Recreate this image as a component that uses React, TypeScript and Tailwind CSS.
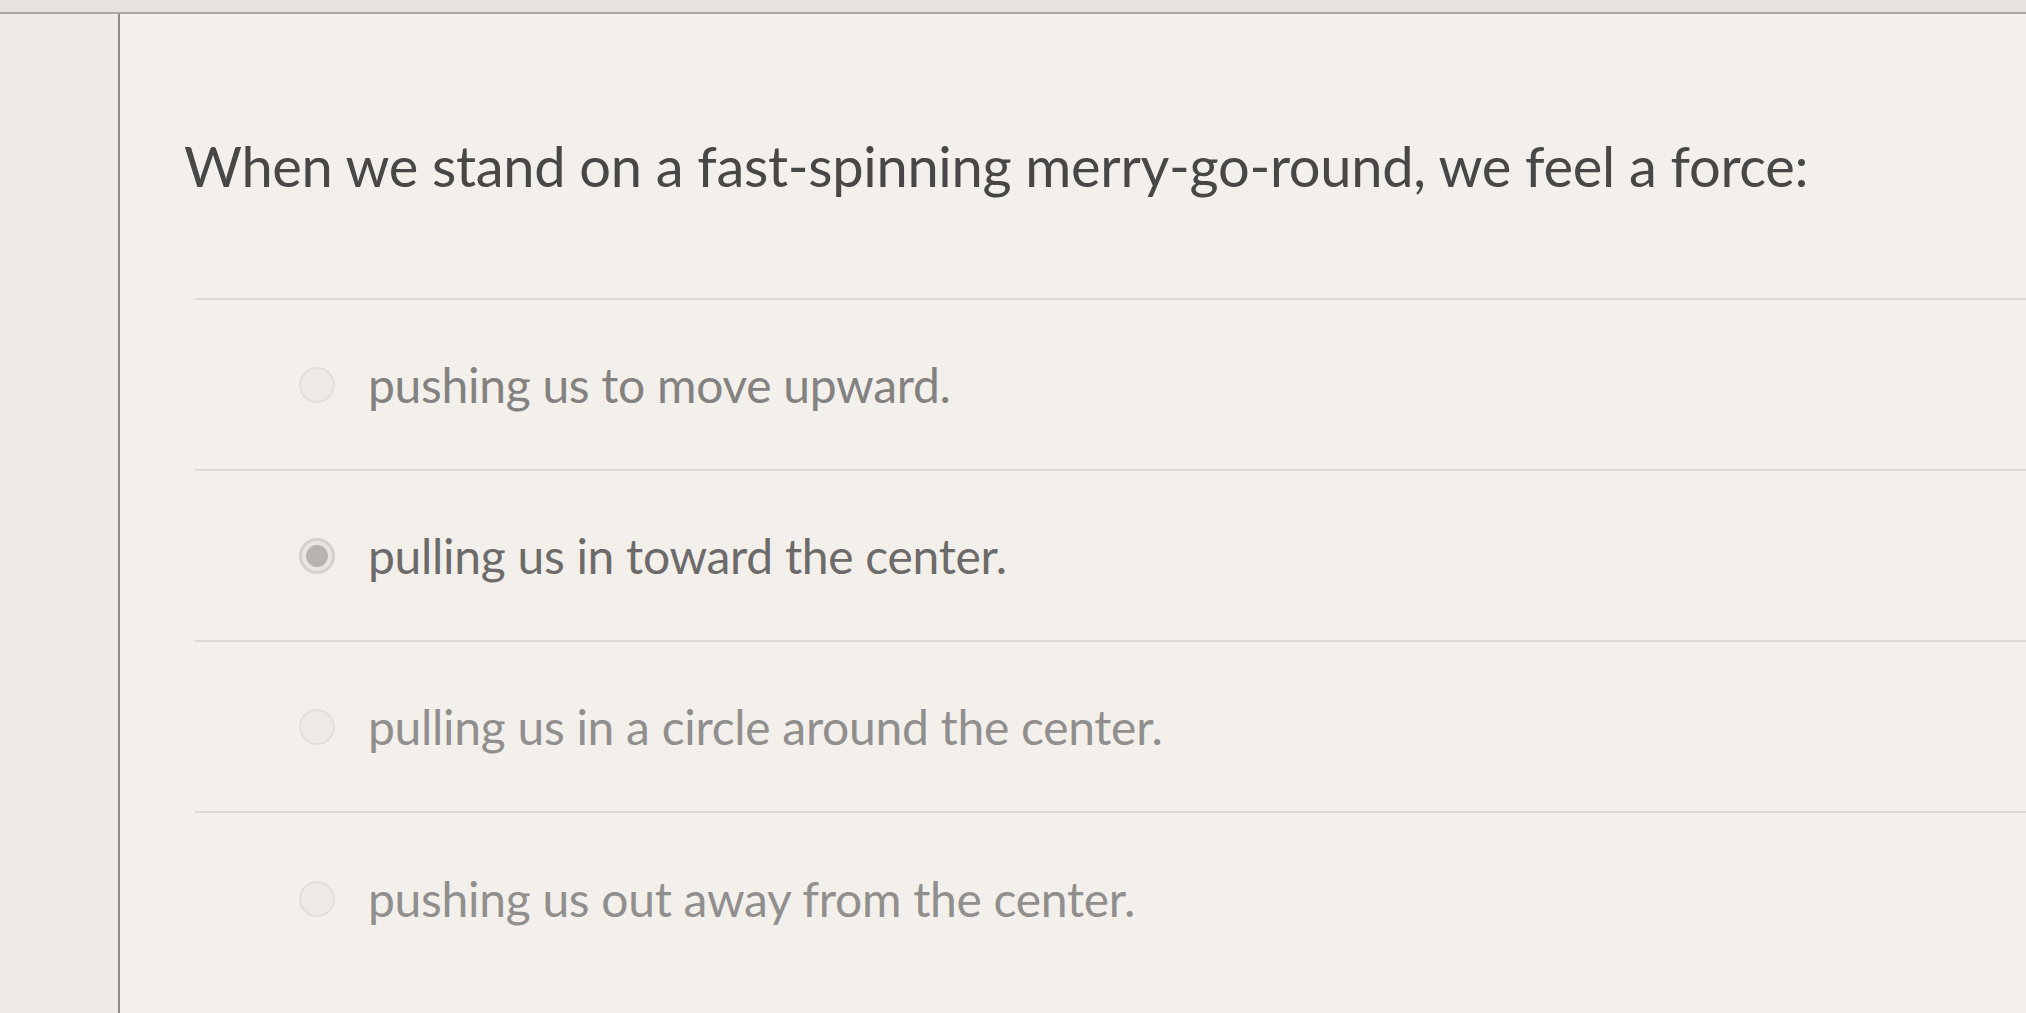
const options = [
  { text: "pushing us to move upward.", selected: false },
  { text: "pulling us in toward the center.", selected: true },
  { text: "pulling us in a circle around the center.", selected: false },
  { text: "pushing us out away from the center.", selected: false },
];

function Radio({ selected }: { selected: boolean }) {
  if (selected) {
    return (
      <span className="flex h-[36px] w-[36px] shrink-0 items-center justify-center rounded-full border-[3px] border-[#d3d0cd] bg-[#e8e5e2]">
        <span className="h-[22px] w-[22px] rounded-full bg-[#b6b3b0]" />
      </span>
    );
  }
  return <span className="h-[36px] w-[36px] shrink-0 rounded-full border-2 border-[#e2dedb] bg-[#ece9e7]" />;
}

export default function App() {
  return (
    <div
      className="flex h-[1013px] w-full flex-col overflow-hidden bg-[#f0ece8]"
      style={{ fontFamily: "Lato, 'Open Sans', sans-serif" }}
    >
      {/* top strip of the window */}
      <div className="h-[14px] shrink-0 border-b-2 border-[#a9a5a1] bg-[#e6e2de]" />

      <div className="flex flex-1">
        <div className="w-[118px] shrink-0 bg-[#efeae6]" />
        <div className="flex-1 border-l-2 border-[#8f8b88] bg-[#f3f0ec]">
          <h1 className="pl-[64px] pt-[119px] text-[56px] font-normal leading-[66px] tracking-[-0.3px] text-[#484747]">
            When we stand on a fast-spinning merry-go-round, we feel a force:
          </h1>

          <div className="ml-[75px] mt-[99px] border-t-2 border-[#dddad6]">
            {options.map((o, i) => (
              <div
                key={i}
                className={`flex h-[171px] items-center gap-[33px] pl-[104px] ${
                  i < options.length - 1 ? "border-b-2 border-[#dcd9d5]" : ""
                }`}
              >
                <Radio selected={o.selected} />
                <span
                  className={`text-[48px] leading-[56px] tracking-[-0.3px] ${
                    o.selected ? "text-[#6c6b6a]" : i === 0 ? "text-[#838281]" : "text-[#918f8e]"
                  }`}
                >
                  {o.text}
                </span>
              </div>
            ))}
          </div>
        </div>
      </div>
    </div>
  );
}
